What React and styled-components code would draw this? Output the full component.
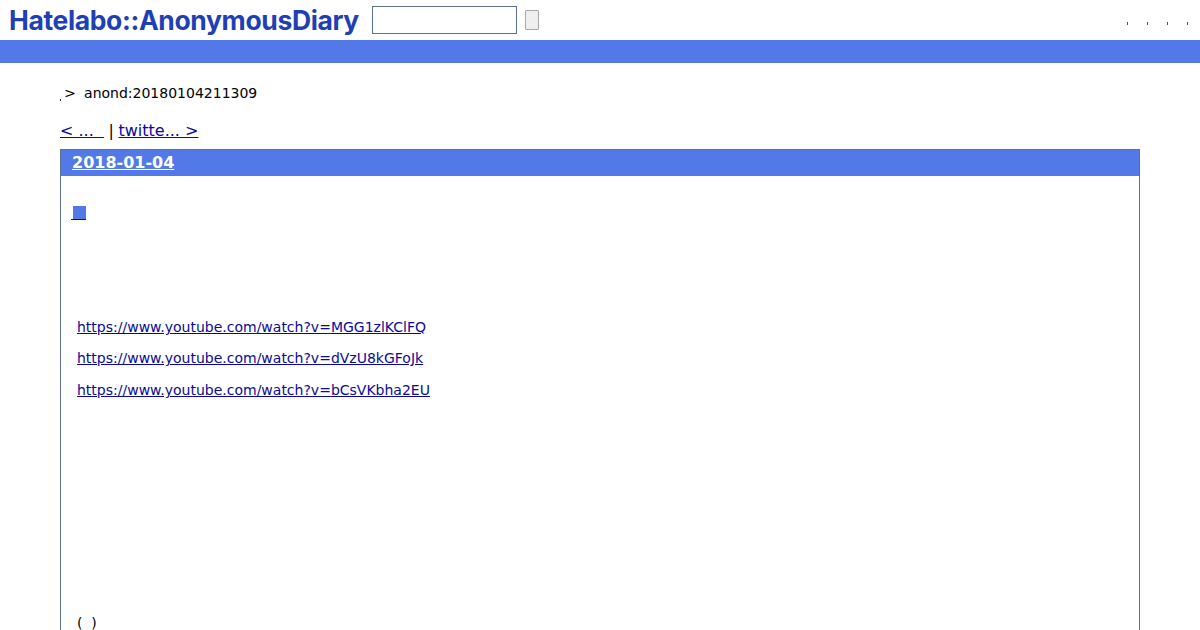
import React from "react";
import styled, { createGlobalStyle } from "styled-components";

const Global = createGlobalStyle`
  html, body { margin: 0; padding: 0; background: #fff; height: 630px; overflow: hidden; }
  body { font-family: "DejaVu Sans", sans-serif; font-size: 14px; color: #000; }
  a { color: #0a0a9a; }
`;

const Header = styled.header`
  height: 40px;
  display: flex;
  align-items: center;
  padding-left: 9px;
  box-sizing: border-box;
`;
const Logo = styled.a`
  font-family: Inter, sans-serif;
  font-weight: 700;
  font-size: 26.5px;
  line-height: 40px;
  letter-spacing: -0.37px;
  width: 351px;
  margin-top: -1px;
  white-space: nowrap;
  color: #1f3fb5;
  text-decoration: none;
`;
const SearchInput = styled.input`
  width: 145px;
  height: 28px;
  box-sizing: border-box;
  margin-left: 12px;
  border: 1px solid #5e7290;
  background: #fff;
  padding: 0;
`;
const SearchButton = styled.button`
  width: 14px;
  height: 20px;
  box-sizing: border-box;
  margin-left: 8px;
  padding: 0;
  border: 1px solid #a9a9a9;
  border-radius: 1px;
  background: #efefef;
`;
const HeaderLinks = styled.nav`
  margin-left: auto;
  margin-right: 12px;
  display: flex;
  gap: 19px;
  margin-top: 6px;
`;
const Dot = styled.span`
  width: 1px;
  height: 3px;
  background: #555;
`;
const Band = styled.div`
  height: 23px;
  background: #5279e7;
`;
const Main = styled.main`
  padding: 21px 60px 0;
`;
const Crumb = styled.div`
  display: flex;
  align-items: baseline;
  height: 18px;
  line-height: 18px;
`;
const CrumbDot = styled.span`
  width: 1px;
  height: 2px;
  background: #333;
  margin-right: 3px;
  align-self: flex-end;
  margin-bottom: 1px;
`;
const CrumbArrow = styled.span`
  font-size: 14.4px;
`;
const CrumbId = styled.span`
  margin-left: 8px;
`;
const Pager = styled.div`
  margin-top: 19px;
  height: 19px;
  line-height: 19px;
  font-size: 16px;
  white-space: pre;
`;
const PagerSep = styled.span`
  margin: 0 -0.5px;
`;
const Day = styled.section`
  margin-top: 9px;
  border: 1px solid #5e7290;
  border-bottom: 0;
  height: 481px;
  box-sizing: border-box;
`;
const DayTitle = styled.h2`
  margin: 0;
  height: 26px;
  padding-left: 11px;
  background: #5279e7;
  font-size: 16px;
  font-weight: 700;
  line-height: 26px;
  a { color: #fff; }
`;
const Body = styled.div`
  padding: 26px 0 0 16px;
`;
const SectionMark = styled.a`
  display: block;
  width: 15px;
  margin-left: -6px;
  height: 20px;
  box-sizing: border-box;
  padding: 4px 0 0 2px;
  text-decoration: none;
  &::before {
    content: "";
    display: block;
    width: 13px;
    height: 13px;
    background: #5279e7;
  }
  &::after {
    content: "";
    display: block;
    height: 1px;
    margin-left: -2px;
    background: #0a0a9a;
  }
`;
const Links = styled.div`
  margin-top: 96px;
  display: flex;
  flex-direction: column;
`;
const LinkRow = styled.p`
  margin: 0 0 ${(p) => p.$gap}px;
  height: 18px;
  line-height: 18px;
`;
const Footer = styled.p`
  margin: 215px 0 0;
  line-height: 18px;
  white-space: pre;
`;

const urls = [
  ["MGG1zlKClFQ", 13],
  ["dVzU8kGFoJk", 14],
  ["bCsVKbha2EU", 0],
];

export default function App() {
  return (
    <>
      <Global />
      <Header>
        <Logo href="#">Hatelabo::AnonymousDiary</Logo>
        <SearchInput />
        <SearchButton />
        <HeaderLinks>
          <Dot /><Dot /><Dot /><Dot />
        </HeaderLinks>
      </Header>
      <Band />
      <Main>
        <Crumb>
          <CrumbDot />
          <CrumbArrow>&gt;</CrumbArrow>
          <CrumbId>anond:20180104211309</CrumbId>
        </Crumb>
        <Pager>
          <a href="#">&lt; ...  </a><PagerSep> | </PagerSep><a href="#">twitte... &gt;</a>
        </Pager>
        <Day>
          <DayTitle><a href="#">2018-01-04</a></DayTitle>
          <Body>
            <SectionMark href="#" />
            <Links>
              {urls.map(([id, gap]) => (
                <LinkRow key={id} $gap={gap}>
                  <a href="#">https://www.youtube.com/watch?v={id}</a>
                </LinkRow>
              ))}
            </Links>
            <Footer>(  )</Footer>
          </Body>
        </Day>
      </Main>
    </>
  );
}
